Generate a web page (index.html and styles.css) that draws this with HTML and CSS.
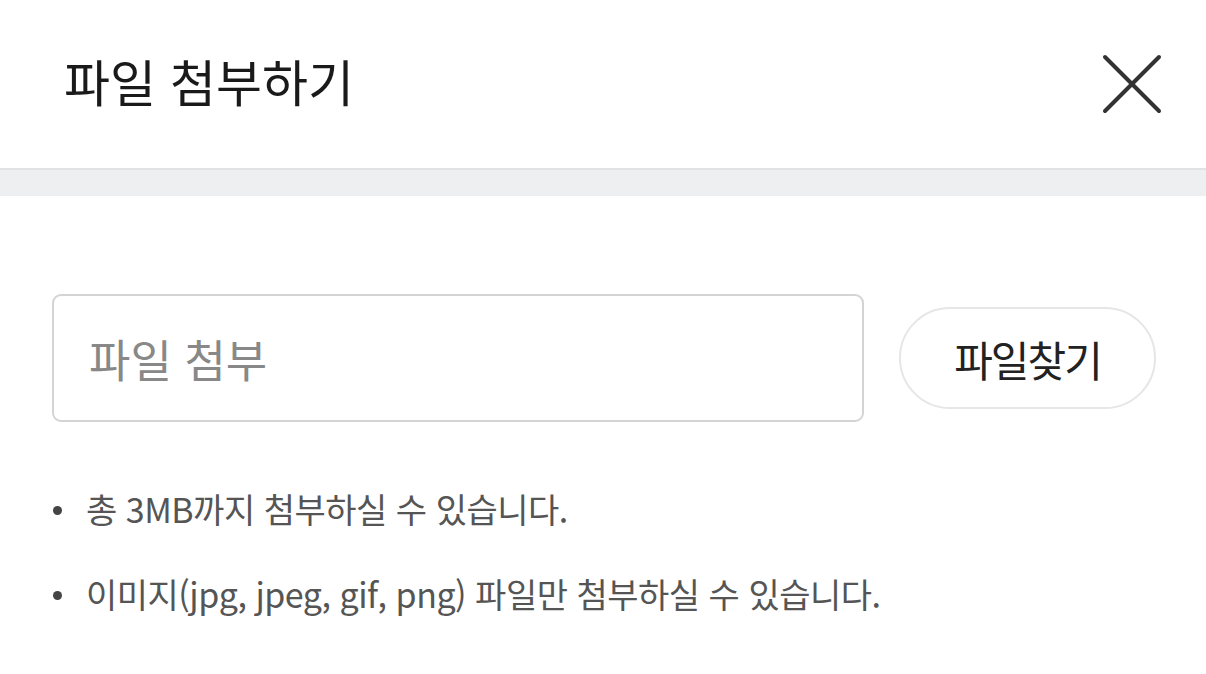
FILE: index.html
```html
<!DOCTYPE html>
<html lang="ko">
<head>
<meta charset="utf-8">
<link rel="stylesheet" href="styles.css">
</head>
<body>
<div class="modal">
  <header class="header">
    <h1 class="title">파일 첨부하기</h1>
    <button class="close" aria-label="닫기">
      <svg width="60" height="60" viewBox="0 0 60 60"><path d="M3 3 L57 57 M57 3 L3 57" stroke="#333" stroke-width="4" stroke-linecap="round" fill="none"/></svg>
    </button>
  </header>
  <div class="band"></div>
  <main class="content">
    <div class="row">
      <div class="field">파일 첨부</div>
      <button class="find">파일찾기</button>
    </div>
    <ul class="notes">
      <li>총 3MB까지 첨부하실 수 있습니다.</li>
      <li>이미지(jpg, jpeg, gif, png) 파일만 첨부하실 수 있습니다.</li>
    </ul>
  </main>
</div>
</body>
</html>
```
FILE: styles.css
```css
html, body {
  margin: 0;
  padding: 0;
  background: #fff;
}
body {
  font-family: "Noto Sans CJK KR", "Noto Sans", sans-serif;
  color: #222;
}
.header {
  height: 170px;
  display: flex;
  align-items: center;
  justify-content: space-between;
  padding: 0 44px 0 64px;
  box-sizing: border-box;
  border-bottom: 2px solid #e1e2e4;
}
.title {
  margin: 0;
  font-size: 50px;
  font-weight: 400;
  color: #1a1a1a;
  letter-spacing: 0;
  position: relative;
  top: -4px;
}
.close {
  border: 0;
  background: none;
  padding: 0;
  width: 60px;
  height: 60px;
  display: flex;
}
.band {
  height: 26px;
  background: #eeeff1;
}
.content {
  padding: 98px 50px 0 52px;
}
.row {
  display: flex;
  align-items: center;
  gap: 35px;
}
.field {
  width: 812px;
  height: 128px;
  box-sizing: border-box;
  border: 2px solid #d4d4d4;
  border-radius: 9px;
  display: flex;
  align-items: center;
  padding-left: 35px;
  font-size: 45px;
  color: #888;
}
.find {
  width: 257px;
  height: 102px;
  box-sizing: border-box;
  border: 2px solid #e6e6e6;
  border-radius: 51px;
  background: #fff;
  font-family: inherit;
  font-size: 42px;
  color: #222;
  letter-spacing: -2px;
  padding: 0;
}
.notes {
  list-style: none;
  margin: 44px 0 0;
  padding: 0;
}
.notes li {
  position: relative;
  padding-left: 34px;
  height: 85px;
  line-height: 85px;
  font-size: 34px;
  color: #555;
  letter-spacing: -0.5px;
}
.notes li::before {
  content: "";
  position: absolute;
  left: 1px;
  top: 40px;
  width: 9px;
  height: 9px;
  border-radius: 50%;
  background: #444;
}
```
